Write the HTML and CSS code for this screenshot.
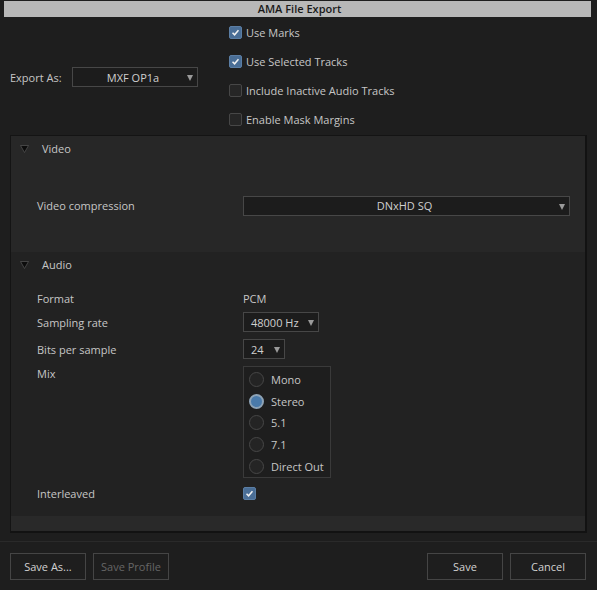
FILE: index.html
```html
<!DOCTYPE html>
<html>
<head>
<meta charset="utf-8">
<link rel="stylesheet" href="styles.css">
</head>
<body>
<div class="win">
  <div class="titlebar">AMA File Export</div>
  <div class="top">
    <div class="export">
      <span class="lbl">Export As:</span>
      <div class="dd dd-export"><span class="ddtext">MXF OP1a</span><span class="arrow"></span></div>
    </div>
    <div class="checks">
      <div class="crow"><span class="cb on"><svg viewBox="0 0 13 13"><path d="M3 6.8 L5.4 9.2 L10 3.8" /></svg></span><span>Use Marks</span></div>
      <div class="crow"><span class="cb on"><svg viewBox="0 0 13 13"><path d="M3 6.8 L5.4 9.2 L10 3.8" /></svg></span><span>Use Selected Tracks</span></div>
      <div class="crow"><span class="cb"></span><span>Include Inactive Audio Tracks</span></div>
      <div class="crow"><span class="cb"></span><span>Enable Mask Margins</span></div>
    </div>
  </div>
  <div class="panel">
    <div class="sec video">
      <div class="shead"><svg class="tri" viewBox="0 0 9 8"><polygon points="0.5,0.5 8.5,0.5 4.5,7.5"/></svg><span>Video</span></div>
      <div class="vrow">
        <span class="flabel">Video compression</span>
        <div class="dd dd-comp"><span class="ddtext">DNxHD SQ</span><span class="arrow"></span></div>
      </div>
    </div>
    <div class="sec audio">
      <div class="shead ahead"><svg class="tri" viewBox="0 0 9 8"><polygon points="0.5,0.5 8.5,0.5 4.5,7.5"/></svg><span>Audio</span></div>
      <div class="arows">
        <div class="arow r-format"><span class="flabel">Format</span><span class="val">PCM</span></div>
        <div class="arow r-dd"><span class="flabel">Sampling rate</span><div class="dd dd-rate"><span class="ddtext left">48000 Hz</span><span class="arrow"></span></div></div>
        <div class="arow r-dd"><span class="flabel">Bits per sample</span><div class="dd dd-bits"><span class="ddtext left">24</span><span class="arrow"></span></div></div>
        <div class="arow r-mix"><span class="flabel mixlbl">Mix</span>
          <div class="radios">
            <div class="rrow"><span class="rb"></span><span>Mono</span></div>
            <div class="rrow"><span class="rb on"></span><span>Stereo</span></div>
            <div class="rrow"><span class="rb"></span><span>5.1</span></div>
            <div class="rrow"><span class="rb"></span><span>7.1</span></div>
            <div class="rrow"><span class="rb"></span><span>Direct Out</span></div>
          </div>
        </div>
        <div class="arow r-inter"><span class="flabel">Interleaved</span><span class="cb on"><svg viewBox="0 0 13 13"><path d="M3 6.8 L5.4 9.2 L10 3.8" /></svg></span></div>
      </div>
    </div>
    <div class="pfoot"></div>
  </div>
  <div class="bottom">
    <div class="bgroup">
      <button class="btn">Save As...</button>
      <button class="btn dis">Save Profile</button>
    </div>
    <div class="bgroup">
      <button class="btn">Save</button>
      <button class="btn">Cancel</button>
    </div>
  </div>
</div>
</body>
</html>
```
FILE: styles.css
```css
* { box-sizing: border-box; }
html, body { margin: 0; padding: 0; }
body {
  background: #1e1e1e;
  width: 597px;
  height: 590px;
  overflow: hidden;
  font-family: "Open Sans", "DejaVu Sans", sans-serif;
  font-size: 11px;
  color: #c6c6c6;
}
.win { width: 597px; height: 590px; display: flex; flex-direction: column; }
.titlebar {
  margin: 1px 6px 0 4px;
  height: 16px;
  background: #b8b8b8;
  color: #1a1a1a;
  font-weight: 600;
  font-size: 11px;
  line-height: 16px;
  text-align: center;
  padding-left: 4px;
}
.top { display: flex; height: 118px; }
.export {
  width: 229px;
  padding-left: 10px;
  display: flex;
  align-items: center;
  padding-top: 2px;
}
.lbl { width: 62px; }
.dd {
  position: relative;
  border: 1px solid #474747;
  background: #1c1c1c;
  height: 20px;
  display: flex;
  align-items: center;
  color: #cfcfcf;
}
.ddtext { flex: 1; text-align: center; padding-right: 4px; }
.ddtext.left { text-align: left; padding-left: 7px; flex: none; }
.arrow {
  position: absolute;
  right: 4px;
  top: 7px;
  width: 0; height: 0;
  border-left: 3.5px solid transparent;
  border-right: 3.5px solid transparent;
  border-top: 6px solid #9a9a9a;
}
.dd-export { width: 126px; }
.checks { display: flex; flex-direction: column; padding-top: 1px; }
.crow { height: 29px; display: flex; align-items: center; gap: 4px; }
.cb {
  width: 13px; height: 13px;
  border: 1px solid #474747;
  background: #262626;
  border-radius: 2px;
  display: inline-block;
}
.cb.on { background: #4a6e96; border-color: #5b7ea4; }
.cb svg { display: block; width: 11px; height: 11px; }
.cb svg path { fill: none; stroke: #f2f2f2; stroke-width: 1.8; }
.panel {
  margin-left: 10px;
  width: 577px;
  height: 398px;
  border-top: 1px solid #141414;
  border-left: 1px solid #141414;
  border-right: 2px solid #121212;
  border-bottom: 2px solid #121212;
  display: flex;
  flex-direction: column;
}
.sec.video { background: #272727; height: 116px; }
.shead { height: 25px; display: flex; align-items: center; padding-left: 9px; }
.shead span { margin-left: 13px; }
.tri { width: 9px; height: 8px; }
.tri polygon { fill: #0c0c0c; stroke: #505050; stroke-width: 0.8; }
.vrow { display: flex; align-items: center; margin-top: 34px; height: 21px; padding-left: 26px; }
.flabel { width: 206px; flex: none; }
.dd-comp { width: 327px; }
.sec.audio { background: #222222; height: 264px; }
.ahead { height: 25px; }
.arows { display: flex; flex-direction: column; gap: 7px; padding-left: 26px; margin-top: 11px; }
.arow { display: flex; align-items: center; }
.r-format { height: 20px; margin-bottom: -3px; }
.r-dd { height: 20px; }
.dd-rate { width: 76px; }
.dd-bits { width: 42px; }
.r-mix { align-items: flex-start; height: 112px; }
.mixlbl { line-height: 16px; }
.radios {
  width: 88px;
  height: 112px;
  border: 1px solid #3a3a3a;
  background: #1e1e1e;
  display: flex;
  flex-direction: column;
  padding-top: 2px;
}
.rrow { height: 22px; display: flex; align-items: center; padding-left: 5px; gap: 7px; }
.rb {
  width: 15px; height: 15px;
  border-radius: 50%;
  border: 1px solid #474747;
  background: #242424;
}
.rb.on { background: #4a7aaa; border: 2px solid #8ea3b6; }
.r-inter { height: 14px; margin-top: 1px; }
.pfoot { flex: 1; background: #292929; }
.bottom {
  margin-top: 8px;
  border-top: 1px solid #2a2a2a;
  flex: 1;
  display: flex;
  justify-content: space-between;
  padding: 11px 11px 0 10px;
  align-items: flex-start;
}
.bgroup { display: flex; gap: 7px; }
.btn {
  width: 76px;
  height: 27px;
  border: 1px solid #454545;
  background: #1e1e1e;
  color: #d2d2d2;
  font-family: "Open Sans", "DejaVu Sans", sans-serif;
  font-size: 11px;
  padding: 0;
}
.btn.dis { color: #666; }
```
